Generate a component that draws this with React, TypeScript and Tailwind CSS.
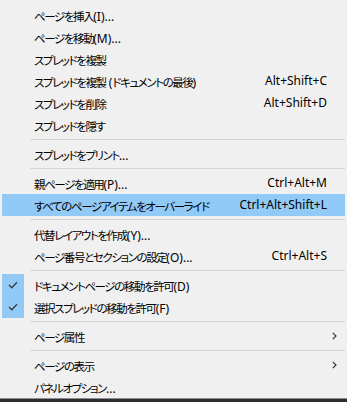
type Item =
  | { kind: 'sep' }
  | { kind: 'item'; label: string; shortcut?: string; checked?: boolean; active?: boolean; submenu?: boolean };

const items: Item[] = [
  { kind: 'item', label: 'ページを挿入(I)...' },
  { kind: 'item', label: 'ページを移動(M)...' },
  { kind: 'item', label: 'スプレッドを複製' },
  { kind: 'item', label: 'スプレッドを複製 (ドキュメントの最後)', shortcut: 'Alt+Shift+C' },
  { kind: 'item', label: 'スプレッドを削除', shortcut: 'Alt+Shift+D' },
  { kind: 'item', label: 'スプレッドを隠す' },
  { kind: 'sep' },
  { kind: 'item', label: 'スプレッドをプリント...' },
  { kind: 'sep' },
  { kind: 'item', label: '親ページを適用(P)...', shortcut: 'Ctrl+Alt+M' },
  { kind: 'item', label: 'すべてのページアイテムをオーバーライド', shortcut: 'Ctrl+Alt+Shift+L', active: true },
  { kind: 'sep' },
  { kind: 'item', label: '代替レイアウトを作成(Y)...' },
  { kind: 'item', label: 'ページ番号とセクションの設定(O)...', shortcut: 'Ctrl+Alt+S' },
  { kind: 'sep' },
  { kind: 'item', label: 'ドキュメントページの移動を許可(D)', checked: true },
  { kind: 'item', label: '選択スプレッドの移動を許可(F)', checked: true },
  { kind: 'sep' },
  { kind: 'item', label: 'ページ属性', submenu: true },
  { kind: 'sep' },
  { kind: 'item', label: 'ページの表示', submenu: true },
  { kind: 'item', label: 'パネルオプション...' },
];

// japanese runs get tighter tracking, ascii runs keep normal spacing
function Label({ text }: { text: string }) {
  const parts = text.split(/([\x20-\x7E]+)/).filter(Boolean);
  return (
    <>
      {parts.map((p, i) =>
        /^[\x20-\x7E]+$/.test(p) ? (
          <span key={i} className="text-[12px] tracking-normal">
            {p}
          </span>
        ) : (
          <span key={i} className="text-[11.5px] tracking-[-1.4px]">
            {p}
          </span>
        )
      )}
    </>
  );
}

function Check() {
  return (
    <svg width="10" height="8" viewBox="0 0 10 8" fill="none">
      <path d="M1 4 L3.8 6.8 L9 1.2" stroke="#3a3a3a" strokeWidth="1.3" />
    </svg>
  );
}

function Chevron() {
  return (
    <svg width="5" height="8" viewBox="0 0 5 8" fill="none">
      <path d="M0.8 0.8 L4 4 L0.8 7.2" stroke="#333" strokeWidth="1.2" />
    </svg>
  );
}

export default function App() {
  return (
    <div className="h-[402px] w-[347px] bg-[#2d2d2d]">
      <div
        className="bg-[#f0f0f0] border-b border-[#8c8c8c] px-[2px] pt-[4px] text-black"
        style={{ fontFamily: '"Noto Sans", "Noto Sans CJK JP", sans-serif', fontFeatureSettings: '"palt"' }}
      >
        {items.map((it, i) =>
          it.kind === 'sep' ? (
            <div key={i} className="h-[7px] pt-[3px] pl-[28px]">
              <div className="h-px bg-[#d5d5d5]" />
            </div>
          ) : (
            <div key={i} className={`flex h-[22px] items-center ${it.active ? 'bg-[#91c9f7]' : ''}`}>
              <div
                className={`flex h-full w-[22px] items-center justify-center ${it.checked ? 'bg-[#91c9f7]' : ''}`}
              >
                {it.checked && <Check />}
              </div>
              <div className="flex-1 pl-[10px] whitespace-nowrap leading-none">
                <Label text={it.label} />
              </div>
              {it.shortcut && <div className="whitespace-nowrap text-[12px] leading-none">{it.shortcut}</div>}
              <div className="flex w-[18px] items-center pl-[5px]">{it.submenu && <Chevron />}</div>
            </div>
          )
        )}
      </div>
    </div>
  );
}
